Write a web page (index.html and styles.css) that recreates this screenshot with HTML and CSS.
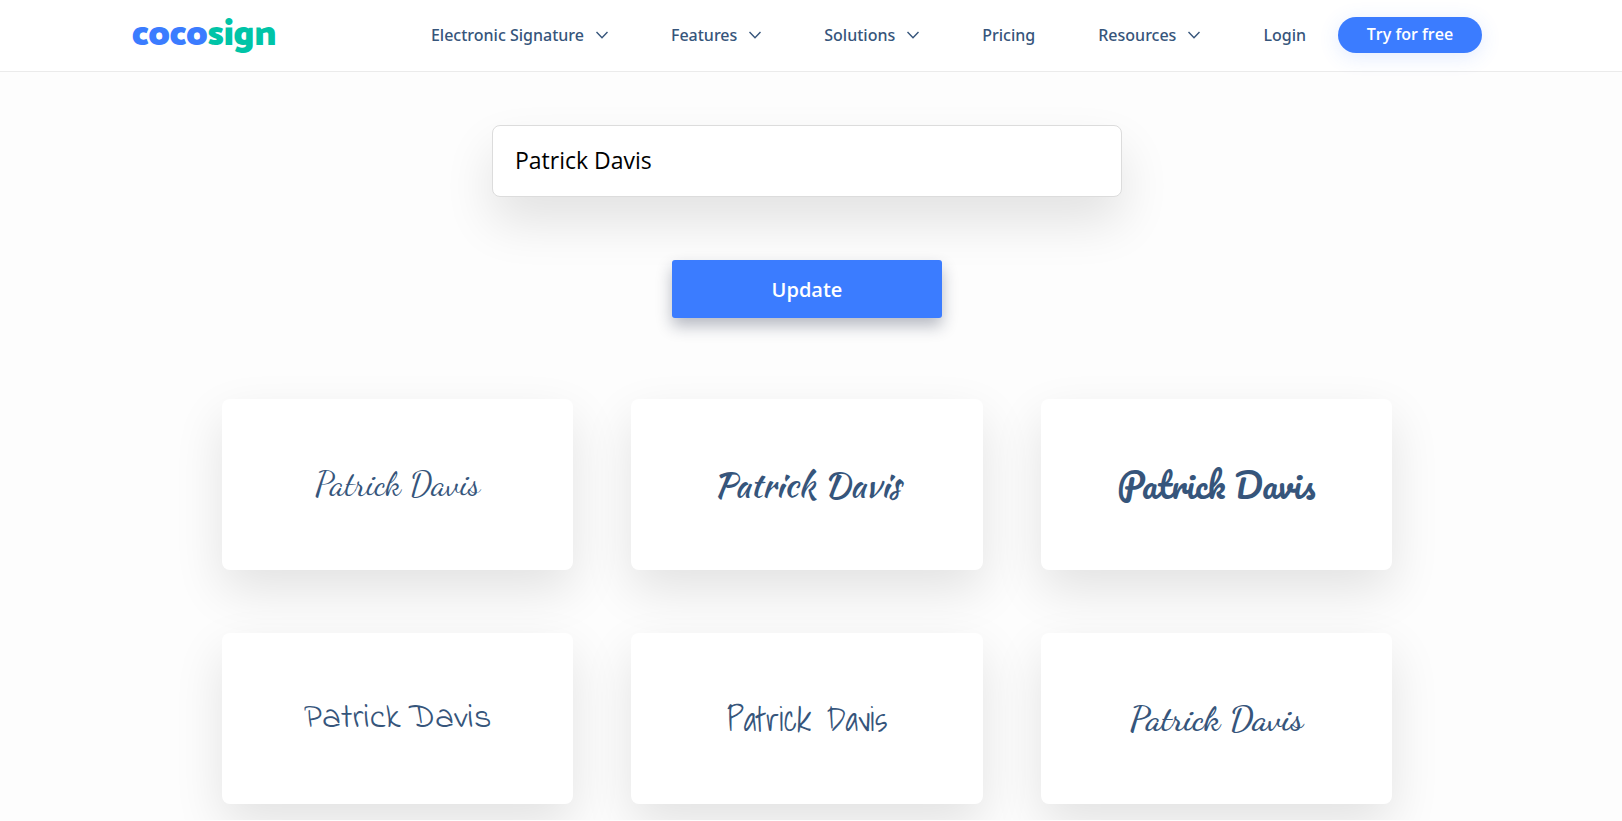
FILE: index.html
```html
<!DOCTYPE html>
<html lang="en">
<head>
    <meta charset="UTF-8">
    <meta name="viewport" content="width=device-width, initial-scale=1.0">
    <title>Online Signature Generator - CocoSign</title>
    <link rel="stylesheet" href="styles.css">
</head>
<body>
    <header class="header">
        <div class="header-inner">
            <a class="logo" href="#"><span class="logo-coco">coco</span><span class="logo-sign">sign</span></a>
            <nav class="nav">
                <a href="#">Electronic Signature <svg class="chevron" viewBox="0 0 12 8"><path d="M0.5 1 L6 6.8 L11.5 1"/></svg></a>
                <a href="#">Features <svg class="chevron" viewBox="0 0 12 8"><path d="M0.5 1 L6 6.8 L11.5 1"/></svg></a>
                <a href="#">Solutions <svg class="chevron" viewBox="0 0 12 8"><path d="M0.5 1 L6 6.8 L11.5 1"/></svg></a>
                <a href="#">Pricing</a>
                <a href="#">Resources <svg class="chevron" viewBox="0 0 12 8"><path d="M0.5 1 L6 6.8 L11.5 1"/></svg></a>
                <a href="#">Login</a>
            </nav>
            <a class="try-btn" href="#">Try for free</a>
        </div>
    </header>
    <main class="main">
        <form class="name-form" id="nameForm">
            <input class="name-input" type="text" id="name" aria-label="Your name" value="Patrick Davis">
            <button class="update-btn" type="submit">Update</button>
        </form>
        <div class="cards">
            <div class="card"><span class="signature dancing">Patrick Davis</span></div>
            <div class="card"><span class="signature kaushan">Patrick Davis</span></div>
            <div class="card"><span class="signature pacifico">Patrick Davis</span></div>
            <div class="card"><span class="signature indie">Patrick Davis</span></div>
            <div class="card"><span class="signature shadows">Patrick Davis</span></div>
            <div class="card"><span class="signature satisfy">Patrick Davis</span></div>
        </div>
    </main>
    <script>
        document.getElementById("nameForm").addEventListener("submit", function(event) {
            event.preventDefault();
            const name = document.getElementById("name").value;
            document.querySelectorAll(".signature").forEach(function(item) {
                item.textContent = name;
            });
        });
    </script>
</body>
</html>
```
FILE: styles.css
```css
* {
    margin: 0;
    padding: 0;
    box-sizing: border-box;
}
body {
    font-family: "Open Sans", sans-serif;
    background-color: #fdfdfd;
    color: #36557b;
}
a {
    color: inherit;
    text-decoration: none;
}
.header {
    background-color: white;
    border-bottom: 1px solid #ebebeb;
    padding-right: 8px;
}
.header-inner {
    display: flex;
    align-items: center;
    width: 90%;
    max-width: 1350px;
    height: 71px;
    margin: 0 auto;
    padding-bottom: 2px;
}
.logo {
    font-family: "Catamaran", "Noto Sans", sans-serif;
    font-size: 36px;
    font-weight: 900;
    line-height: 40px;
}
.logo-coco {
    color: #3b7cff;
}
.logo-sign {
    color: #00c4a7;
}
.nav {
    display: flex;
    gap: 63px;
    margin-left: auto;
    margin-right: 32px;
    font-family: "Noto Sans", sans-serif;
    font-size: 16px;
    font-weight: 500;
    line-height: 34px;
}
.nav a {
    display: flex;
    align-items: center;
    gap: 12px;
}
.chevron {
    width: 12px;
    height: 8px;
    fill: none;
    stroke: #36557b;
    stroke-width: 1.4;
}
.try-btn {
    width: 144px;
    height: 36px;
    border-radius: 18px;
    background-color: #3b7cff;
    box-shadow: 0 4px 20px rgba(59, 124, 255, 0.15);
    color: white;
    font-size: 16px;
    font-weight: 600;
    line-height: 34px;
    text-align: center;
}
.main {
    padding: 53px 8px 16px 0;
}
.name-form {
    display: flex;
    flex-direction: column;
    align-items: center;
    gap: 63px;
}
.name-input {
    width: 90%;
    max-width: 630px;
    height: 72px;
    padding: 0 22px 3px;
    border: 1px solid #dcdcdc;
    border-radius: 8px;
    background-color: white;
    box-shadow: 0 25px 50px rgba(0, 0, 0, 0.11);
    color: black;
    font-family: inherit;
    font-size: 23px;
}
.update-btn {
    position: relative;
    width: 270px;
    height: 58px;
    border: none;
    border-radius: 3px;
    background-color: #3b7cff;
    box-shadow: 0 8px 16px rgba(20, 30, 60, 0.3);
    color: white;
    font-family: inherit;
    font-size: 20px;
    font-weight: 600;
    cursor: pointer;
}
.cards {
    display: grid;
    grid-template-columns: repeat(3, 1fr);
    gap: 63px 58px;
    width: 90%;
    max-width: 1170px;
    margin: 81px auto 0;
}
.card {
    display: flex;
    align-items: center;
    justify-content: center;
    height: 171px;
    border-radius: 8px;
    background-color: white;
    box-shadow: 0 20px 50px rgba(0, 0, 0, 0.11);
}
.signature {
    font-size: 34px;
    line-height: 48px;
}
.dancing {
    font-family: "Dancing Script", "Liberation Serif", cursive;
}
.kaushan {
    font-family: "Kaushan Script", "Liberation Serif", cursive;
}
.pacifico {
    font-family: "Pacifico", "Lato", cursive;
}
.indie {
    font-family: "Indie Flower", "Lato", cursive;
    font-size: 35px;
}
.shadows {
    font-family: "Shadows Into Light", "Open Sans", cursive;
}
.satisfy {
    font-family: "Satisfy", "Dancing Script", "Liberation Serif", cursive;
    font-size: 35px;
    font-weight: 600;
}
```
